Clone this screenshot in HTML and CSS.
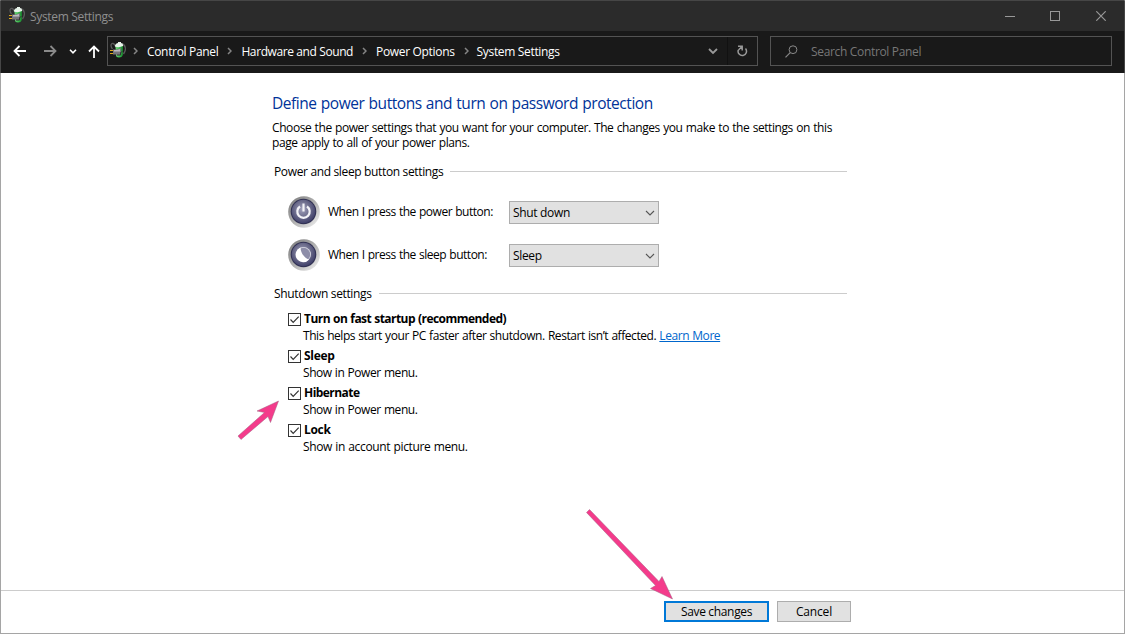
FILE: index.html
```html
<!DOCTYPE html>
<html lang="en">
<head>
    <meta charset="UTF-8">
    <meta name="viewport" content="width=device-width, initial-scale=1.0">
    <title>System Settings</title>
    <link rel="stylesheet" href="styles.css">
</head>
<body>
    <svg width="0" height="0" class="defs">
        <defs>
            <linearGradient id="rim" x1="0" y1="0" x2="1" y2="1">
                <stop offset="0" stop-color="#777"/>
                <stop offset="0.5" stop-color="#b0b0b0"/>
                <stop offset="1" stop-color="#f4f4f4"/>
            </linearGradient>
            <radialGradient id="face" cx="0.45" cy="0.4" r="0.6">
                <stop offset="0" stop-color="#a3a3bd"/>
                <stop offset="0.55" stop-color="#6d6d8c"/>
                <stop offset="1" stop-color="#40406a"/>
            </radialGradient>
            <linearGradient id="battery" x1="0" y1="0" x2="1" y2="0">
                <stop offset="0" stop-color="#6fd67a"/>
                <stop offset="0.6" stop-color="#35b649"/>
                <stop offset="1" stop-color="#17752a"/>
            </linearGradient>
        </defs>
        <symbol id="plug" viewBox="0 0 16 16">
            <path d="M2.500 7C0 4 1 1 3 1.500S5 4 6 5M12 2c4 1 4.500 6 1.500 10" fill="none" stroke="#5a5a5a" stroke-width="1.300"/>
            <path d="M5.500 4Q6 1.500 9 1.500T13 4V13q-1 2.500-4 2.500T6 13z" fill="url(#battery)"/>
            <path d="M5 3.500Q5.500 1 8 1V0h3v1q2 0 2 2v1Q9 6 5 4.500z" fill="#e8f3ea"/>
            <path d="M3 7.500h4L11 6v6.500L8 13.500 6 12.500H3z" fill="#77747a"/>
            <path d="M4 8h3l3-1v2.500H4z" fill="#bdb9bf"/>
            <path d="M7 13h3.500V10.500l2-1" fill="none" stroke="#333"/>
            <path d="M0 8.500h3M0 11.500h3" stroke="#e0a91b"/>
        </symbol>
        <symbol id="crumb" viewBox="0 0 5 8">
            <path d="M1 1l3 3-3 3" fill="none" stroke="#858585" stroke-width="1.500"/>
        </symbol>
        <symbol id="drop" viewBox="0 0 10 6">
            <path d="M1 1l4 4 4-4" fill="none" stroke="#555" stroke-width="1.100"/>
        </symbol>
        <symbol id="check" viewBox="0 0 13 13">
            <rect x="0.500" y="0.500" width="12" height="12" fill="#fff" stroke="#333"/>
            <path d="M2.500 6.500l2.700 2.800 5.500-5.600" fill="none" stroke="#333" stroke-width="1.200"/>
        </symbol>
    </svg>

    <div class="window">
        <header class="titlebar">
            <svg class="app-icon" width="16" height="16"><use href="#plug"/></svg>
            <span class="title">System Settings</span>
            <div class="controls">
                <svg width="10" height="10"><path d="M0 5.500h10" stroke="#999"/></svg>
                <svg width="10" height="10"><rect x="0.500" y="0.500" width="9" height="9" fill="none" stroke="#999"/></svg>
                <svg width="10" height="10"><path d="M0.300 0.300l9.400 9.400M9.700 0.300l-9.400 9.400" stroke="#999" stroke-width="1.200"/></svg>
            </div>
        </header>

        <nav class="toolbar">
            <div class="arrows">
                <svg width="13" height="12"><path d="M13 6H1.500M6.500 1l-5 5 5 5" fill="none" stroke="#fff" stroke-width="1.800"/></svg>
                <svg width="13" height="12"><path d="M0 6h11.500M6.500 1l5 5-5 5" fill="none" stroke="#8a8a8a" stroke-width="1.800"/></svg>
                <svg class="recent" width="8" height="5"><path d="M1 0.800l3 3 3-3" fill="none" stroke="#fff" stroke-width="1.600"/></svg>
                <svg class="up" width="12" height="13"><path d="M6 13V1.500M1 6.500l5-5 5 5" fill="none" stroke="#fff" stroke-width="1.800"/></svg>
            </div>
            <div class="address">
                <svg class="place-icon" width="16" height="16"><use href="#plug"/></svg>
                <svg width="5" height="8"><use href="#crumb"/></svg>
                <span class="crumb">Control Panel</span>
                <svg width="5" height="8"><use href="#crumb"/></svg>
                <span class="crumb wide">Hardware and Sound</span>
                <svg width="5" height="8"><use href="#crumb"/></svg>
                <span class="crumb">Power Options</span>
                <svg width="5" height="8"><use href="#crumb"/></svg>
                <span class="crumb last">System Settings</span>
                <svg class="history" width="10" height="7"><path d="M1 1l4 4 4-4" fill="none" stroke="#999" stroke-width="1.800"/></svg>
                <div class="refresh">
                    <svg width="11" height="12"><path d="M1.300 5A4.200 4.200 0 1 0 8.500 3.600M1 1.200h4.200v4.200M5 1.500L1.500 5" fill="none" stroke="#999" stroke-width="1.500"/></svg>
                </div>
            </div>
            <div class="search">
                <svg width="13" height="13"><circle cx="8" cy="4.700" r="3.900" fill="none" stroke="#888"/><path d="M5.200 7.600L0.500 12.300" stroke="#888" stroke-width="1.200"/></svg>
                <span>Search Control Panel</span>
            </div>
        </nav>

        <main class="content">
            <h1>Define power buttons and turn on password protection</h1>
            <p class="intro">Choose the power settings that you want for your computer. The changes you make to the settings on this page apply to all of your power plans.</p>

            <h2 class="buttons-head"><span>Power and sleep button settings</span></h2>
            <div class="row">
                <svg width="32" height="32" viewBox="0 0 32 32">
                    <circle cx="16" cy="16" r="15.800" fill="url(#rim)"/>
                    <circle cx="15.500" cy="15.500" r="12.800" fill="#303052"/>
                    <circle cx="15.500" cy="15.500" r="11.800" fill="url(#face)"/>
                    <path d="M12 10.500a6.200 6.200 0 1 0 7 0" fill="none" stroke="#f4f4f8" stroke-width="2.200"/>
                    <path d="M15.500 7.500v8" stroke="#f4f4f8" stroke-width="2.200"/>
                </svg>
                <label>When I press the power button:</label>
                <div class="select"><span>Shut down</span><svg width="10" height="6"><use href="#drop"/></svg></div>
            </div>
            <div class="row">
                <svg width="32" height="32" viewBox="0 0 32 32">
                    <circle cx="16" cy="16" r="15.800" fill="url(#rim)"/>
                    <circle cx="15.500" cy="15.500" r="12.800" fill="#303052"/>
                    <circle cx="15.500" cy="15.500" r="11.800" fill="url(#face)"/>
                    <circle cx="15.500" cy="15.500" r="7.500" fill="#dcdce6"/>
                    <circle cx="15.500" cy="15.500" r="6.700" fill="#8d8da8"/>
                    <path d="M12.500 8.500a7.600 7.600 0 1 0 8.500 12C16.500 19 12.500 14 12.500 8.500z" fill="#fff"/>
                </svg>
                <label>When I press the sleep button:</label>
                <div class="select"><span>Sleep</span><svg width="10" height="6"><use href="#drop"/></svg></div>
            </div>

            <h2 class="shutdown-head"><span>Shutdown settings</span></h2>
            <ul class="options">
                <li>
                    <svg width="13" height="13"><use href="#check"/></svg>
                    <strong>Turn on fast startup (recommended)</strong>
                    <p>This helps start your PC faster after shutdown. Restart isn’t affected. <a href="#">Learn More</a></p>
                </li>
                <li>
                    <svg width="13" height="13"><use href="#check"/></svg>
                    <strong class="short">Sleep</strong>
                    <p>Show in Power menu.</p>
                </li>
                <li>
                    <svg width="13" height="13"><use href="#check"/></svg>
                    <strong>Hibernate</strong>
                    <p>Show in Power menu.</p>
                </li>
                <li>
                    <svg width="13" height="13"><use href="#check"/></svg>
                    <strong class="short">Lock</strong>
                    <p class="account">Show in account picture menu.</p>
                </li>
            </ul>
        </main>

        <footer class="footer">
            <button class="save">Save changes</button>
            <button class="cancel">Cancel</button>
        </footer>
    </div>

    <!-- pointers to the steps -->
    <svg class="pointer hibernate" width="46" height="44" viewBox="0 0 46 44">
        <path d="M44.500 2L36.500 23.500 34 17.500 7 40.500 4 37 30.500 13.500 23 12z" fill="#f43b8b" stroke="#a06080" stroke-width="0.500"/>
    </svg>
    <svg class="pointer save-arrow" width="92" height="96" viewBox="0 0 92 96">
        <path d="M3.500 6.500L6.500 3.500 76 75.500 79 70.500 89.500 93 67.500 82.500 72.500 79.500z" fill="#f43b8b" stroke="#a06080" stroke-width="0.500"/>
    </svg>
</body>
</html>
```
FILE: styles.css
```css
* {
    box-sizing: border-box;
}
body {
    margin: 0;
    font-family: "Open Sans", "Noto Sans", sans-serif;
    font-size: 12px;
    line-height: 15px;
    letter-spacing: -0.33px;
    color: #000;
    background: #fff;
    overflow: hidden;
}
svg {
    display: block;
    flex: none;
}
.defs {
    position: absolute;
}
.window {
    width: 1125px;
    height: 634px;
    display: flex;
    flex-direction: column;
    border: 1px solid #a5a5a5;
    border-top-color: #464646;
}
.titlebar {
    height: 30px;
    margin: 0 -1px;
    padding-left: 9px;
    display: flex;
    align-items: center;
    background: #2b2b2b;
    border-left: 1px solid #464646;
    border-right: 1px solid #464646;
    color: #8f8f8f;
}
.title {
    margin-left: 5px;
}
.app-icon {
    margin-left: -1px;
    margin-top: -2px;
}
.controls {
    margin-left: auto;
    margin-top: -1px;
    display: flex;
    gap: 36px;
    padding-right: 18px;
}
.controls svg:first-child {
    margin-right: -1px;
}
.toolbar {
    height: 42px;
    margin: 0 -1px;
    display: flex;
    padding: 5px 12px 7px 12px;
    background: #191919;
    border-left: 1px solid #464646;
    border-right: 1px solid #464646;
    color: #fff;
}
.arrows {
    width: 94px;
    display: flex;
    align-items: center;
}
.arrows svg + svg {
    margin-left: 18px;
}
.arrows .recent {
    margin-left: 12px;
}
.arrows .up {
    margin-left: 11px;
}
.address {
    width: 651px;
    border: 1px solid #535353;
    display: flex;
    align-items: center;
    padding-left: 2px;
}
.place-icon {
    margin-top: -2px;
    margin-right: 7px;
}
.crumb {
    margin: 0 9px;
    white-space: nowrap;
}
.crumb.wide {
    letter-spacing: -0.4px;
}
.crumb.last {
    margin-left: 8px;
}
.history {
    margin-left: auto;
    margin-right: 9px;
    margin-top: 1px;
}
.refresh {
    width: 30px;
    height: 28px;
    display: flex;
    align-items: center;
    justify-content: center;
    border-left: 1px solid #111;
}
.search {
    margin-left: 12px;
    width: 342px;
    border: 1px solid #535353;
    display: flex;
    align-items: center;
    padding-left: 14px;
    color: #777;
}
.search span {
    margin-left: 13px;
}
.content {
    flex: 1;
    width: 575px;
    margin-left: 271px;
    padding-top: 20px;
}
h1 {
    margin: 0;
    font-size: 15.5px;
    font-weight: normal;
    line-height: 20px;
    letter-spacing: -0.45px;
    word-spacing: 0.6px;
    color: #003399;
    white-space: nowrap;
}
.intro {
    margin: 7px 0 0;
    letter-spacing: -0.42px;
    word-spacing: 0.6px;
}
h2 {
    margin: 14px 0 0 2px;
    font-size: 12px;
    font-weight: normal;
    line-height: 15px;
    display: flex;
    align-items: center;
    letter-spacing: -0.35px;
    white-space: nowrap;
}
h2::after {
    content: "";
    flex: 1;
    height: 1px;
    margin-left: 7px;
    background: #ccc;
}
.row {
    display: flex;
    align-items: center;
    height: 32px;
    margin: 11px 0 0 16px;
}
.buttons-head + .row {
    margin-top: 17px;
}
.row label {
    width: 181px;
    margin-left: 8px;
    margin-top: -1px;
    letter-spacing: -0.48px;
    word-spacing: 0.5px;
    white-space: nowrap;
}
.select {
    width: 150px;
    height: 23px;
    margin-top: 1px;
    padding: 0 3px;
    display: flex;
    align-items: center;
    justify-content: space-between;
    background: #e1e1e1;
    border: 1px solid #adadad;
}
.shutdown-head {
    margin-top: 15px;
}
.options {
    list-style: none;
    margin: 9px 0 0 16px;
    padding: 0;
}
.options li {
    height: 37px;
    display: grid;
    grid-template-columns: 13px 1fr;
    grid-template-rows: 17px 17px;
    column-gap: 3px;
    align-items: center;
    white-space: nowrap;
}
.options li svg {
    margin-top: 2px;
}
.options strong {
    letter-spacing: -0.55px;
    word-spacing: 0.5px;
}
.options .short {
    letter-spacing: -0.3px;
}
.options p {
    grid-column: 1 / 3;
    margin: 0 0 0 15px;
    letter-spacing: -0.44px;
    word-spacing: 0.5px;
}
.options .account {
    letter-spacing: -0.35px;
}
.options a {
    color: #0066cc;
}
.footer {
    height: 43px;
    border-top: 1px solid #ccc;
    padding: 10px 0 0 663px;
    display: flex;
    gap: 8px;
}
button {
    height: 21px;
    padding: 0;
    font: inherit;
    letter-spacing: -0.33px;
    color: #000;
    background: #e1e1e1;
    border: 1px solid #adadad;
}
.save {
    width: 105px;
    border: 2px solid #0078d7;
}
.cancel {
    width: 74px;
    letter-spacing: -0.15px;
}
.pointer {
    position: absolute;
}
.hibernate {
    left: 234px;
    top: 399px;
}
.save-arrow {
    left: 583px;
    top: 506px;
}
```
